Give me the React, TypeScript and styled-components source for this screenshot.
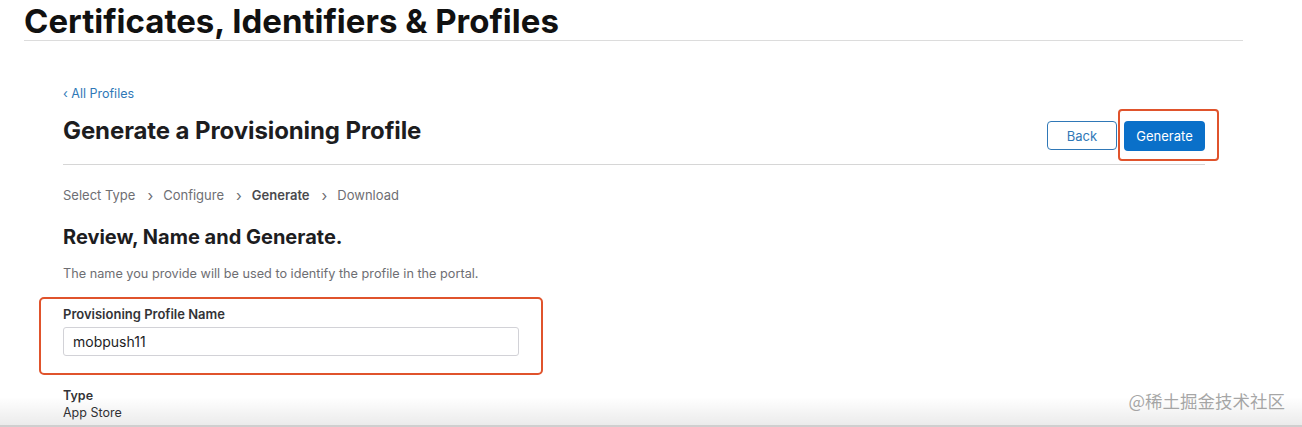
import styled, { createGlobalStyle } from 'styled-components';

const GlobalStyle = createGlobalStyle`
  html, body {
    margin: 0;
    padding: 0;
    background: #ffffff;
    height: 100%;
    overflow: hidden;
  }
  body {
    font-family: Inter, "Liberation Sans", Arial, sans-serif;
    color: #1d1d1f;
    -webkit-font-smoothing: antialiased;
  }
`;

const steps = [
  { label: 'Select Type', active: false },
  { label: 'Configure', active: false },
  { label: 'Generate', active: true },
  { label: 'Download', active: false },
];

const App = () => {
  return (
    <Page>
      <GlobalStyle />
      <Header>
        <SiteTitle>Certificates, Identifiers &amp; Profiles</SiteTitle>
      </Header>

      <Content>
        <BackLink href="#">‹ All Profiles</BackLink>
        <TitleRow>
          <PageTitle>Generate a Provisioning Profile</PageTitle>
          <Actions>
            <OutlineButton>Back</OutlineButton>
            <Highlighted>
              <PrimaryButton>Generate</PrimaryButton>
              <HighlightFrame />
            </Highlighted>
          </Actions>
        </TitleRow>

        <Steps>
          {steps.map((s, i) => (
            <Step key={s.label}>
              {i > 0 && <Chevron>›</Chevron>}
              <StepLabel $active={s.active}>{s.label}</StepLabel>
            </Step>
          ))}
        </Steps>

        <SectionTitle>Review, Name and Generate.</SectionTitle>
        <Description>The name you provide will be used to identify the profile in the portal.</Description>

        <FieldBox>
          <FieldLabel>Provisioning Profile Name</FieldLabel>
          <TextInput defaultValue="mobpush11" />
        </FieldBox>

        <InfoBlock>
          <InfoLabel>Type</InfoLabel>
          <InfoValue>App Store</InfoValue>
        </InfoBlock>
      </Content>

      <BottomFade />
      <Watermark>@稀土掘金技术社区</Watermark>
    </Page>
  );
};

const Page = styled.div`
  position: relative;
  width: 1302px;
  height: 427px;
  overflow: hidden;
`;

const Header = styled.header`
  width: 1219px;
  margin-left: 24px;
  padding-top: 3px;
  border-bottom: 1px solid #dcdcdc;
  height: 41px;
  box-sizing: border-box;
`;

const SiteTitle = styled.h1`
  margin: 0;
  font-size: 33px;
  line-height: 37px;
  font-weight: 700;
  letter-spacing: 0;
  color: #111111;
`;

const Content = styled.main`
  width: 1142px;
  margin-left: 63px;
  padding-top: 45px;
  display: flex;
  flex-direction: column;
`;

const BackLink = styled.a`
  font-size: 12.5px;
  line-height: 16px;
  color: #2f78b7;
  text-decoration: none;
`;

const TitleRow = styled.div`
  display: flex;
  align-items: flex-start;
  justify-content: space-between;
  margin-top: 14px;
  height: 48px;
  border-bottom: 1px solid #d6d6d6;
`;

const PageTitle = styled.h2`
  margin: 0;
  font-size: 24px;
  line-height: 30px;
  font-weight: 700;
  color: #1d1d1f;
  letter-spacing: -0.1px;
`;

const Actions = styled.div`
  display: flex;
  gap: 7px;
  margin-top: 5px;
`;

const OutlineButton = styled.button`
  width: 70px;
  height: 29px;
  border: 1px solid #2f78b7;
  border-radius: 4px;
  background: #ffffff;
  color: #2f78b7;
  font-family: inherit;
  font-size: 13px;
`;

const Highlighted = styled.div`
  position: relative;
`;

const PrimaryButton = styled.button`
  width: 81px;
  height: 30px;
  border: none;
  border-radius: 4px;
  background: #0a70c9;
  color: #ffffff;
  font-family: inherit;
  font-size: 13px;
`;

const HighlightFrame = styled.div`
  position: absolute;
  left: -6px;
  top: -12px;
  right: -14px;
  bottom: -10px;
  border: 2px solid #e0532c;
  border-radius: 4px;
  pointer-events: none;
`;

const Steps = styled.ol`
  list-style: none;
  display: flex;
  margin: 22px 0 0;
  padding: 0;
  font-size: 13px;
  line-height: 17px;
`;

const Step = styled.li`
  display: flex;
  align-items: center;
`;

const Chevron = styled.span`
  color: #6e6e73;
  margin: 0 10px 0 12px;
  font-size: 15px;
`;

const StepLabel = styled.span<{ $active: boolean }>`
  color: ${({ $active }) => ($active ? '#4a4a4d' : '#6e6e73')};
  font-weight: ${({ $active }) => ($active ? 600 : 400)};
`;

const SectionTitle = styled.h3`
  margin: 21px 0 0;
  font-size: 20px;
  line-height: 24px;
  font-weight: 700;
  color: #1d1d1f;
`;

const Description = styled.p`
  margin: 17px 0 0;
  font-size: 12.7px;
  line-height: 16px;
  color: #6e6e73;
`;

const FieldBox = styled.div`
  margin: 15px 0 0 -24px;
  width: 504px;
  height: 78px;
  box-sizing: border-box;
  padding: 7px 22px 0;
  border: 2px solid #e0532c;
  border-radius: 5px;
  display: flex;
  flex-direction: column;
`;

const FieldLabel = styled.label`
  font-size: 13px;
  line-height: 16px;
  font-weight: 600;
  color: #333336;
`;

const TextInput = styled.input`
  margin-top: 5px;
  width: 456px;
  height: 29px;
  box-sizing: border-box;
  border: 1px solid #d2d2d7;
  border-radius: 3px;
  padding: 0 9px;
  font-family: inherit;
  font-size: 14px;
  color: #1d1d1f;
  outline: none;
`;

const InfoBlock = styled.div`
  margin-top: 13px;
  display: flex;
  flex-direction: column;
`;

const InfoLabel = styled.span`
  font-size: 12.5px;
  line-height: 16px;
  font-weight: 600;
  color: #333336;
`;

const InfoValue = styled.span`
  margin-top: 1px;
  font-size: 12.5px;
  line-height: 16px;
  color: #333336;
`;

const BottomFade = styled.div`
  position: absolute;
  left: 0;
  right: 0;
  bottom: 0;
  height: 30px;
  background: linear-gradient(to bottom, rgba(0, 0, 0, 0), rgba(0, 0, 0, 0.08));
  border-bottom: 2px solid #cfcfcf;
  box-sizing: border-box;
  pointer-events: none;
`;

const Watermark = styled.div`
  position: absolute;
  right: 17px;
  bottom: 15px;
  font-family: "Noto Sans CJK SC", "Liberation Sans", sans-serif;
  font-size: 17.5px;
  line-height: 22px;
  color: rgba(150, 150, 150, 0.85);
`;

export default App;
